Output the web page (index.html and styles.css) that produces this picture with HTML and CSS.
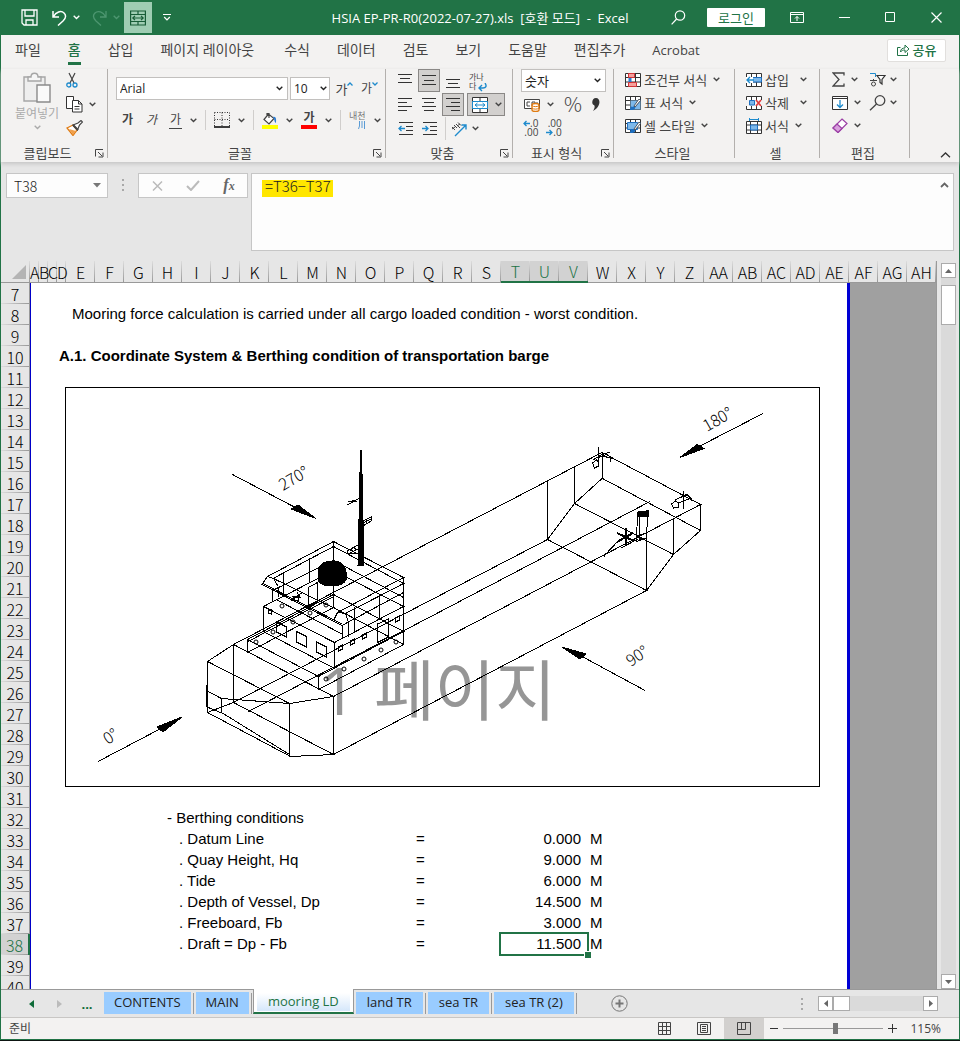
FILE: index.html
```html
<!DOCTYPE html>
<html lang="ko">
<head>
<meta charset="utf-8">
<title>HSIA EP-PR-R0(2022-07-27).xls - Excel</title>
<link rel="stylesheet" href="styles.css">
</head>
<body>
<svg class="defs" aria-hidden="true">
  <symbol id="chev" viewBox="0 0 7 5"><path d="M.7 .8L3.5 3.5 6.3 .8" fill="none" stroke="currentColor" stroke-width="1.4"/></symbol>
  <symbol id="launch" viewBox="0 0 9 9"><path d="M.5 7.500V.5H8M3 3l4 4M8 3.500V8H3.500" fill="none" stroke="#444"/></symbol>
  <symbol id="grid" viewBox="0 0 16 14"><path d="M.5 .5h15v13H.5zM.5 4.500h15M.5 9h15M5.500 .5v13M10.500 .5v13" fill="#fff" stroke="#333"/></symbol>
</svg>
<div class="window">
  <header class="titlebar">
    <div class="quick">
      <button class="q save" aria-label="저장"><svg width="17" height="17" viewBox="0 0 17 17" fill="none" stroke="#fff" stroke-width="1.3"><path d="M1 1h15v15H3l-2-2zM4 1v6h9V1M5 16v-5h7v5"/></svg></button>
      <button class="q undo" aria-label="실행 취소"><svg width="15" height="16" viewBox="0 0 15 16" fill="none" stroke="#fff" stroke-width="1.5"><path d="M1 1v6h6M1.500 6.500C4 2 9 0 12 3s1 6-1 8l-5 4.500"/></svg><svg class="chev" width="7" height="5"><use href="#chev"/></svg></button>
      <button class="q redo" aria-label="다시 실행"><svg width="15" height="16" viewBox="0 0 15 16" fill="none" stroke="currentColor" stroke-width="1.3"><path d="M14 1v6H8M13.500 6.500C11 2 6 0 3 3s-1 6 1 8l5 4.500"/></svg><svg class="chev" width="7" height="5"><use href="#chev"/></svg></button>
      <button class="q merge" aria-label="병합하고 가운데 맞춤"><svg width="16" height="16" viewBox="0 0 16 16" fill="none" stroke="#185c37" stroke-width="1.2"><path d="M.6 1h14.800v14H.6zM.6 4.500h14.800M.6 11.500h14.800M8 1v3.500M8 11.500V15M3 8h10M5 5.800L2.800 8 5 10.200M11 5.800L13.200 8 11 10.200"/></svg></button>
      <button class="q more" aria-label="사용자 지정"><svg width="8" height="7" viewBox="0 0 8 7" fill="none" stroke="#fff"><path d="M0 .5h8M1.200 3L4 5.800 6.800 3" stroke-width="1.200"/></svg></button>
    </div>
    <div class="doc">HSIA EP-PR-R0(2022-07-27).xls  [호환 모드]  -  Excel</div>
    <div class="sys">
      <button class="q" aria-label="검색"><svg width="15" height="15" viewBox="0 0 15 15" fill="none" stroke="#fff" stroke-width="1.200"><circle cx="9" cy="5.500" r="4.700"/><path d="M5.600 9L.6 14.400"/></svg></button>
      <button class="login">로그인</button>
      <button class="q" aria-label="리본 표시"><svg width="14" height="11" viewBox="0 0 14 11" fill="none" stroke="#fff"><path d="M.5 .5h13v10H.5zM.5 2.500h13M7 9V4.500M5 6.500l2-2 2 2"/></svg></button>
      <button class="q" aria-label="최소화"><svg width="11" height="11"><path d="M0 5.500h11" stroke="#fff"/></svg></button>
      <button class="q" aria-label="최대화"><svg width="11" height="11"><path d="M.5 .5h9v9h-9z" fill="none" stroke="#fff"/></svg></button>
      <button class="q" aria-label="닫기"><svg width="11" height="11"><path d="M.5 .5l10 10M10.500 .5l-10 10" stroke="#fff" stroke-width="1.200"/></svg></button>
    </div>
  </header>

  <nav class="tabs">
    <a href="#">파일</a><a href="#" class="on">홈</a><a href="#">삽입</a><a href="#" class="wide">페이지 레이아웃</a><a href="#">수식</a><a href="#">데이터</a><a href="#">검토</a><a href="#">보기</a><a href="#">도움말</a><a href="#">편집추가</a><a href="#">Acrobat</a>
    <button class="share"><svg width="13" height="12" viewBox="0 0 13 12" fill="none" stroke="#217346"><path d="M3.500 3.500H.5v8h10V8.500M3.500 8c0-3 2-4 4.500-4V1l4 4-4 3.500V6C6 6 4.500 6.500 3.500 8z"/></svg>공유</button>
  </nav>

  <section class="ribbon">
    <div class="group clip">
      <div class="body row">
        <button class="paste"><svg width="28" height="31" viewBox="0 0 28 31" fill="#eee" stroke="#a6a6a6" stroke-width="1.400"><path d="M1 5h21v24H1z"/><path d="M5 9V5h3c0-5 7-5 7 0h3v4z" fill="#f6f6f6"/><path d="M14 13h13v17H14z" fill="#fafafa" stroke="#8a8a8a"/></svg><span>붙여넣기</span><svg class="chev" width="7" height="5"><use href="#chev"/></svg></button>
        <div class="col side">
          <button aria-label="잘라내기"><svg width="12" height="16" viewBox="0 0 12 16" fill="none"><path d="M3 1l5 10M9 1L4 11" stroke="#444" stroke-width="1.200"/><circle cx="2.800" cy="13" r="2" stroke="#1e8bcd" stroke-width="1.300"/><circle cx="9" cy="13" r="2" stroke="#1e8bcd" stroke-width="1.300"/></svg></button>
          <button aria-label="복사"><svg width="17" height="17" viewBox="0 0 17 17" fill="#fff" stroke="#333"><path d="M.5 .5h7v12h-7z"/><path d="M6.500 4.500h6l3.500 3.500v8H6.500zM12.500 4.500V8H16M8.500 10.500h5M8.500 13h5"/></svg><svg class="chev" width="7" height="5"><use href="#chev"/></svg></button>
          <button aria-label="서식 복사"><svg width="17" height="16" viewBox="0 0 17 16"><path d="M1 8l6-3 4 5-4 5.500z" fill="#fff" stroke="#e07b12" stroke-width="1.300"/><path d="M3 9l7 2-3 4z" fill="#f0a04b"/><path d="M7 5l5-2 3-2.500 1.500 1.500-3 3-2 5z" fill="#fff" stroke="#444" stroke-width="1.200"/><path d="M7 5l5 5" stroke="#444" stroke-width="2"/></svg></button>
        </div>
      </div>
      <div class="label"><span>클립보드</span><button aria-label="클립보드 옵션"><svg width="9" height="9"><use href="#launch"/></svg></button></div>
    </div>

    <div class="group font">
      <div class="body col">
        <div class="row fonts">
          <label class="combo name"><input value="Arial" aria-label="글꼴"><svg width="7" height="5"><use href="#chev"/></svg></label>
          <label class="combo size"><input value="10" aria-label="글꼴 크기"><svg width="7" height="5"><use href="#chev"/></svg></label>
          <button class="grow">가<svg width="6" height="4" viewBox="0 0 6 4"><path d="M.5 3.500L3 1l2.500 2.500" fill="none" stroke="#1e8bcd" stroke-width="1.300"/></svg></button>
          <button class="grow small">가<svg width="6" height="4" viewBox="0 0 6 4"><path d="M.5 .5L3 3 5.500 .5" fill="none" stroke="#1e8bcd" stroke-width="1.300"/></svg></button>
        </div>
        <div class="row styles">
          <button class="ga b">가</button><button class="ga i">가</button><button class="ga u">가</button>
          <svg class="chev" width="7" height="5"><use href="#chev"/></svg><i class="bar"></i>
          <button aria-label="테두리"><svg width="16" height="16" viewBox="0 0 16 16" fill="none" stroke="#333"><path d="M.5 .5h15v14M.5 .5v14M8 .5v14M.5 7.500h15" stroke-dasharray="1 1.500"/><path d="M0 15h16" stroke="#000" stroke-width="1.500"/></svg></button>
          <svg class="chev" width="7" height="5"><use href="#chev"/></svg><i class="bar"></i>
          <button aria-label="채우기 색"><svg width="16" height="17" viewBox="0 0 16 17"><path d="M6.500 2L2 7.500 7 12l5-5.500zM5 4V1.500h2V6" fill="#fff" stroke="#444" stroke-width="1.200"/><path d="M11 5c4-1 3 4 3 6-2-1-1-3-3-6z" fill="#2b7cd3"/><path d="M0 13h16v4H0z" fill="#ff0"/></svg></button>
          <svg class="chev" width="7" height="5"><use href="#chev"/></svg>
          <button class="ga red">가</button>
          <svg class="chev" width="7" height="5"><use href="#chev"/></svg><i class="bar"></i>
          <button class="ruby"><span>내천</span><svg width="8" height="8" viewBox="0 0 8 8" fill="none" stroke="#5a9bd5"><path d="M1.500 0v5l-1 3M4 0v7M6.500 0v8"/></svg></button>
          <svg class="chev" width="7" height="5"><use href="#chev"/></svg>
        </div>
      </div>
      <div class="label"><span>글꼴</span><button aria-label="글꼴 옵션"><svg width="9" height="9"><use href="#launch"/></svg></button></div>
    </div>

    <div class="group align">
      <div class="body aligns">
        <button aria-label="위쪽"><svg width="14" height="15" viewBox="0 0 14 15"><path d="M0 1.500h14M2 5.500h10M0 9.500h14" stroke="#333"/></svg></button>
        <button class="on" aria-label="가운데"><svg width="14" height="15" viewBox="0 0 14 15"><path d="M0 2.500h14M2 7.500h10M0 11.500h14" stroke="#333"/></svg></button>
        <button aria-label="아래쪽"><svg width="14" height="15" viewBox="0 0 14 15"><path d="M0 6.500h14M2 10.500h10M0 14.500h14" stroke="#333"/></svg></button>
        <button class="wrap"><span>가나<br>다</span><svg width="9" height="9" viewBox="0 0 9 9" fill="none" stroke="#1e8bcd" stroke-width="1.400"><path d="M7 0c2 3 1 5-2 5H1M4 2L1 5l3 3"/></svg></button>
        <button aria-label="왼쪽"><svg width="14" height="15" viewBox="0 0 14 15"><path d="M0 1.500h14M0 5.500h9M0 9.500h14M0 13.500h9" stroke="#333"/></svg></button>
        <button aria-label="가로 가운데"><svg width="14" height="15" viewBox="0 0 14 15"><path d="M0 1.500h14M2 5.500h10M0 9.500h14M2 13.500h10" stroke="#333"/></svg></button>
        <button class="on" aria-label="오른쪽"><svg width="14" height="15" viewBox="0 0 14 15"><path d="M0 1.500h14M5 5.500h9M0 9.500h14M5 13.500h9" stroke="#333"/></svg></button>
        <button class="on mergebtn" aria-label="병합"><svg width="16" height="16" viewBox="0 0 16 16"><path d="M.5 .5h15v15H.5zM8 .5v4M8 11.500v4" fill="#fff" stroke="#333"/><path d="M.5 4.500h15v7H.5z" fill="#fff" stroke="#1e8bcd"/><path d="M3 8h10M5.500 6L3 8l2.500 2M10.500 6L13 8l-2.500 2" fill="none" stroke="#1e8bcd"/></svg><svg class="chev" width="7" height="5"><use href="#chev"/></svg></button>
        <button aria-label="내어쓰기"><svg width="15" height="15" viewBox="0 0 15 15" fill="none"><path d="M1 1.500h14M8 5.500h7M8 9.500h7M1 13.500h14" stroke="#333"/><path d="M7 7.500H1M3.500 5L1 7.500 3.500 10" stroke="#1e8bcd" stroke-width="1.300"/></svg></button>
        <button aria-label="들여쓰기"><svg width="15" height="15" viewBox="0 0 15 15" fill="none"><path d="M1 1.500h14M8 5.500h7M8 9.500h7M1 13.500h14" stroke="#333"/><path d="M0 7.500h6M3.500 5L6 7.500 3.500 10" stroke="#1e8bcd" stroke-width="1.300"/></svg></button>
        <button class="orient" aria-label="방향"><svg width="16" height="16" viewBox="0 0 16 16" fill="none"><path d="M4 15L14.500 4.500M10.500 4h4.500v4.500" stroke="#1e8bcd" stroke-width="1.400"/><path d="M1 6l3 3M3 4l3 3M5 3l4 4M7 1.500l3 3M1 8l3-2M6 5l3-2" stroke="#444"/></svg><svg class="chev" width="7" height="5"><use href="#chev"/></svg></button>
      </div>
      <div class="label"><span>맞춤</span><button aria-label="맞춤 옵션"><svg width="9" height="9"><use href="#launch"/></svg></button></div>
    </div>

    <div class="group num">
      <div class="body col">
        <label class="combo fmt"><input value="숫자" aria-label="표시 형식"><svg width="7" height="5"><use href="#chev"/></svg></label>
        <div class="row nums">
          <button aria-label="회계"><svg width="17" height="15" viewBox="0 0 17 15" fill="none"><path d="M.5 2.500h15v9H.5z" fill="#fff" stroke="#444"/><path d="M6 5H3v4h3M8 9V5h3v4M13 5v3" stroke="#444"/><path d="M8 8c0-2 7-2 7 0v5c0 2-7 2-7 0z" fill="#fff" stroke="#e07b12" stroke-width="1.400"/><path d="M8 8.500c1 1.500 6 1.500 7 0M8 11c1 1.500 6 1.500 7 0" stroke="#e07b12"/></svg><svg class="chev" width="7" height="5"><use href="#chev"/></svg></button>
          <button class="pct">%</button>
          <button aria-label="쉼표"><svg width="8" height="13" viewBox="0 0 8 13"><path d="M4 0c5 0 5 9-3 13 2-3 2-5 1-6C-1 6 0 0 4 0z" fill="#333"/></svg></button>
        </div>
        <div class="row decs">
          <button class="dec"><svg width="7" height="7" viewBox="0 0 7 7" fill="none" stroke="#1e8bcd" stroke-width="1.300"><path d="M7 3.500H1M3.500 1L1 3.500 3.500 6"/></svg>.0<br>.00</button>
          <button class="dec">.00<br><svg width="7" height="7" viewBox="0 0 7 7" fill="none" stroke="#1e8bcd" stroke-width="1.300"><path d="M0 3.500h6M3.500 1L6 3.500 3.500 6"/></svg>.0</button>
        </div>
      </div>
      <div class="label"><span>표시 형식</span><button aria-label="표시 형식 옵션"><svg width="9" height="9"><use href="#launch"/></svg></button></div>
    </div>

    <div class="group stl">
      <div class="body col list">
        <button><svg width="16" height="14" viewBox="0 0 16 14"><use href="#grid"/><path d="M3.500 .5h6v4h-6zM3.500 9.500h8v4h-8z" fill="#f4a09c" stroke="#d13438"/><path d="M3.500 5h3v4h-3z" fill="#2b7cd3"/></svg>조건부 서식<svg class="chev" width="7" height="5"><use href="#chev"/></svg></button>
        <button><svg width="16" height="14" viewBox="0 0 16 14"><use href="#grid"/><path d="M5.500 4.500h10v9h-10z" fill="#7db8ea"/><path d="M5 14c0-4 2-4 3-3l6-8 2 1-6 8c0 2-3 2-5 2z" fill="#1e6fc0"/><path d="M9 10l5-7 1.500 1.500L10 11z" fill="#fff" stroke="#444" stroke-width=".8"/></svg>표 서식<svg class="chev" width="7" height="5"><use href="#chev"/></svg></button>
        <button><svg width="16" height="14" viewBox="0 0 16 14"><use href="#grid"/><path d="M2.500 3.500h10v7h-10z" fill="#7db8ea" stroke="#1e6fc0"/><path d="M5 14c0-4 2-4 3-3l6-8 2 1-6 8c0 2-3 2-5 2z" fill="#1e6fc0"/><path d="M9 10l5-7 1.500 1.500L10 11z" fill="#fff" stroke="#444" stroke-width=".8"/></svg>셀 스타일<svg class="chev" width="7" height="5"><use href="#chev"/></svg></button>
      </div>
      <div class="label"><span>스타일</span></div>
    </div>

    <div class="group cells">
      <div class="body col list">
        <button><svg width="16" height="14" viewBox="0 0 16 14"><use href="#grid"/><path d="M6 4.500h9.500V9H6z" fill="#7db8ea" stroke="#1e6fc0"/><path d="M0 4h7v6H0z" fill="#fff"/><path d="M8 7H1M4 4L1 7l3 3" fill="none" stroke="#1e8bcd" stroke-width="1.400"/></svg><span>삽입</span><svg class="chev far" width="7" height="5"><use href="#chev"/></svg></button>
        <button><svg width="16" height="14" viewBox="0 0 16 14"><use href="#grid"/><path d="M0 4h16v6H0z" fill="#f3f2f1"/><path d="M3.500 4.500h5V9h-5z" fill="#7db8ea" stroke="#1e6fc0"/><path d="M10 4l5 6M15 4l-5 6" stroke="#e03b3b" stroke-width="1.600"/></svg><span>삭제</span><svg class="chev far" width="7" height="5"><use href="#chev"/></svg></button>
        <button><svg width="16" height="16" viewBox="0 0 16 16"><path d="M.5 3.500h15v12H.5zM.5 7h15M.5 12h15M4.500 3.500v12M11.500 3.500v12" fill="#fff" stroke="#333"/><path d="M4.500 7h7v5h-7z" fill="#7db8ea" stroke="#1e6fc0"/><path d="M3.500 1.500h9M3.500 0v3M12.500 0v3" stroke="#1e8bcd"/></svg><span>서식</span><svg class="chev" width="7" height="5"><use href="#chev"/></svg></button>
      </div>
      <div class="label"><span>셀</span></div>
    </div>

    <div class="group edit">
      <div class="body edits">
        <button aria-label="합계"><svg width="13" height="15" viewBox="0 0 13 15" fill="none" stroke="#444" stroke-width="1.300"><path d="M12 3.500V1H1l6 6.500L1 14h11v-2.500"/></svg><svg class="chev" width="7" height="5"><use href="#chev"/></svg></button>
        <button aria-label="정렬 및 필터"><svg width="17" height="15" viewBox="0 0 17 15" fill="none"><path d="M1 1.500h5.500V5" stroke="#1e8bcd"/><path d="M1 8.500h7M4.500 7v2" stroke="#444"/><circle cx="4.500" cy="12" r="2" stroke="#444"/><path d="M8 3.500h8l-3 4v4.500l-2-1.500v-3z" stroke="#333" fill="#fff" stroke-width="1.200"/></svg><svg class="chev" width="7" height="5"><use href="#chev"/></svg></button>
        <button aria-label="채우기"><svg width="16" height="14" viewBox="0 0 16 14" fill="#fff" stroke="#333"><path d="M.5 .5h15v13H.5zM.5 2.500h15"/><path d="M8 4v7M5 8.500L8 11.500l3-3" fill="none" stroke="#1e8bcd" stroke-width="1.300"/></svg><svg class="chev" width="7" height="5"><use href="#chev"/></svg></button>
        <button aria-label="찾기"><svg width="17" height="16" viewBox="0 0 17 16" fill="none" stroke="#444" stroke-width="1.300"><circle cx="11" cy="5.500" r="4.800"/><path d="M7.500 9L1 15.300"/></svg><svg class="chev" width="7" height="5"><use href="#chev"/></svg></button>
        <button aria-label="지우기"><svg width="16" height="15" viewBox="0 0 16 15" stroke="#9b3fa5" stroke-width="1.200"><path d="M10 1l5 4.500-9 9L1 10z" fill="#fff"/><path d="M5 6l5 4.500-4 4L1 10z" fill="#d9a0de"/></svg><svg class="chev" width="7" height="5"><use href="#chev"/></svg></button>
      </div>
      <div class="label"><span>편집</span></div>
    </div>
    <button class="collapse" aria-label="리본 축소"><svg width="11" height="6" viewBox="0 0 11 6"><path d="M1 5.300L5.500 1 10 5.300" fill="none" stroke="#333" stroke-width="1.300"/></svg></button>
  </section>

  <section class="formula">
    <label class="namebox"><input value="T38" aria-label="이름 상자"><svg width="8" height="5"><path d="M0 0h8L4 4.500z" fill="#777"/></svg></label>
    <svg class="dots" width="2" height="12"><path d="M0 1h2M0 6h2M0 11h2" stroke="#a8a8a8" stroke-width="2"/></svg>
    <div class="fxbtns">
      <button aria-label="취소"><svg width="11" height="10"><path d="M1 .5l9 9M10 .5l-9 9" stroke="#bbb" stroke-width="1.500"/></svg></button>
      <button aria-label="입력"><svg width="14" height="11"><path d="M1 6l4 4 8-9" fill="none" stroke="#bbb" stroke-width="2"/></svg></button>
      <button class="fx" aria-label="함수 삽입"><i>f<small>x</small></i></button>
    </div>
    <div class="fbox">
      <textarea aria-label="수식 입력줄" spellcheck="false">=T36−T37</textarea>
      <button aria-label="축소"><svg width="9" height="6" viewBox="0 0 9 6"><path d="M1 5l3.500-3.500L8 5" fill="none" stroke="#666" stroke-width="1.800"/></svg></button>
    </div>
  </section>

  <main class="work">
    <div class="sheet">
      <table>
        <colgroup><col class="rh"><col span="4" class="nar"><col span="30" class="std"></colgroup>
        <thead><tr><th class="corner"><svg width="14" height="14"><path d="M14 0v14H0z" fill="#b4b4b4"/></svg></th><th>A</th><th>B</th><th>C</th><th>D</th><th>E</th><th>F</th><th>G</th><th>H</th><th>I</th><th>J</th><th>K</th><th>L</th><th>M</th><th>N</th><th>O</th><th>P</th><th>Q</th><th>R</th><th>S</th><th class="sel">T</th><th class="sel">U</th><th class="sel">V</th><th>W</th><th>X</th><th>Y</th><th>Z</th><th>AA</th><th>AB</th><th>AC</th><th>AD</th><th>AE</th><th>AF</th><th>AG</th><th>AH</th></tr></thead>
        <tbody>
          <tr><th>7</th><td class="first last" colspan="31"></td><td class="out" colspan="3"></td></tr>
          <tr><th>8</th><td class="first" colspan="4"></td><td class="last note" colspan="27">Mooring force calculation is carried under all cargo loaded condition - worst condition.</td><td class="out" colspan="3"></td></tr>
          <tr><th>9</th><td class="first last" colspan="31"></td><td class="out" colspan="3"></td></tr>
          <tr><th>10</th><td class="first" colspan="3"></td><td class="last head" colspan="28">A.1. Coordinate System &amp; Berthing condition of transportation barge</td><td class="out" colspan="3"></td></tr>
          <tr><th>11</th><td class="first last" colspan="31"></td><td class="out" colspan="3"></td></tr>
          <tr><th>12</th><td class="first last" colspan="31"></td><td class="out" colspan="3"></td></tr>
          <tr><th>13</th><td class="first last" colspan="31"></td><td class="out" colspan="3"></td></tr>
          <tr><th>14</th><td class="first last" colspan="31"></td><td class="out" colspan="3"></td></tr>
          <tr><th>15</th><td class="first last" colspan="31"></td><td class="out" colspan="3"></td></tr>
          <tr><th>16</th><td class="first last" colspan="31"></td><td class="out" colspan="3"></td></tr>
          <tr><th>17</th><td class="first last" colspan="31"></td><td class="out" colspan="3"></td></tr>
          <tr><th>18</th><td class="first last" colspan="31"></td><td class="out" colspan="3"></td></tr>
          <tr><th>19</th><td class="first last" colspan="31"></td><td class="out" colspan="3"></td></tr>
          <tr><th>20</th><td class="first last" colspan="31"></td><td class="out" colspan="3"></td></tr>
          <tr><th>21</th><td class="first last" colspan="31"></td><td class="out" colspan="3"></td></tr>
          <tr><th>22</th><td class="first last" colspan="31"></td><td class="out" colspan="3"></td></tr>
          <tr><th>23</th><td class="first last" colspan="31"></td><td class="out" colspan="3"></td></tr>
          <tr><th>24</th><td class="first last" colspan="31"></td><td class="out" colspan="3"></td></tr>
          <tr><th>25</th><td class="first last" colspan="31"></td><td class="out" colspan="3"></td></tr>
          <tr><th>26</th><td class="first last" colspan="31"></td><td class="out" colspan="3"></td></tr>
          <tr><th>27</th><td class="first last" colspan="31"></td><td class="out" colspan="3"></td></tr>
          <tr><th>28</th><td class="first last" colspan="31"></td><td class="out" colspan="3"></td></tr>
          <tr><th>29</th><td class="first last" colspan="31"></td><td class="out" colspan="3"></td></tr>
          <tr><th>30</th><td class="first last" colspan="31"></td><td class="out" colspan="3"></td></tr>
          <tr><th>31</th><td class="first last" colspan="31"></td><td class="out" colspan="3"></td></tr>
          <tr><th>32</th><td class="first" colspan="7"></td><td class="last cond" colspan="24">- Berthing conditions</td><td class="out" colspan="3"></td></tr>
          <tr><th>33</th><td class="first" colspan="7"></td><td class="item" colspan="9">. Datum Line</td><td class="eq">=</td><td colspan="2"></td><td class="val" colspan="3">0.000</td><td class="last eq" colspan="9">M</td><td class="out" colspan="3"></td></tr>
          <tr><th>34</th><td class="first" colspan="7"></td><td class="item" colspan="9">. Quay Height, Hq</td><td class="eq">=</td><td colspan="2"></td><td class="val" colspan="3">9.000</td><td class="last eq" colspan="9">M</td><td class="out" colspan="3"></td></tr>
          <tr><th>35</th><td class="first" colspan="7"></td><td class="item" colspan="9">. Tide</td><td class="eq">=</td><td colspan="2"></td><td class="val" colspan="3">6.000</td><td class="last eq" colspan="9">M</td><td class="out" colspan="3"></td></tr>
          <tr><th>36</th><td class="first" colspan="7"></td><td class="item" colspan="9">. Depth of Vessel, Dp</td><td class="eq">=</td><td colspan="2"></td><td class="val" colspan="3">14.500</td><td class="last eq" colspan="9">M</td><td class="out" colspan="3"></td></tr>
          <tr><th>37</th><td class="first" colspan="7"></td><td class="item" colspan="9">. Freeboard, Fb</td><td class="eq">=</td><td colspan="2"></td><td class="val" colspan="3">3.000</td><td class="last eq" colspan="9">M</td><td class="out" colspan="3"></td></tr>
          <tr><th class="sel">38</th><td class="first" colspan="7"></td><td class="item" colspan="9">. Draft = Dp - Fb</td><td class="eq">=</td><td colspan="2"></td><td class="val active" colspan="3">11.500</td><td class="last eq" colspan="9">M</td><td class="out" colspan="3"></td></tr>
          <tr><th>39</th><td class="first last" colspan="31"></td><td class="out" colspan="3"></td></tr>
          <tr><th>40</th><td class="first last" colspan="31"></td><td class="out" colspan="3"></td></tr>
        </tbody>
      </table>
      <svg class="drawing" width="755" height="400" viewBox="65 387 755 400" role="img" aria-label="바지선 좌표계">
        <text class="watermark" x="319" y="715">1 페이지</text>
        <g fill="none" stroke="#000" stroke-width="1" shape-rendering="crispEdges">
          <path d="M65.500 387.500H819.500V786.500H65.500z"/>
          <!-- hull -->
          <path d="M207.500 661.500L233.500 644.500L602 452.500L700.500 504.500L333.500 696.500L233.500 644.500V702.500L333.500 754.500L646.500 590.500L547.500 539.500L233.500 702.500L207.500 712.500V661.500L289.500 703.500L333.500 696.500V754.500L290.500 756.500L207.500 712.500M289.500 703.500V756.500M289.500 703.500L221.500 698.500V712.500L289.500 754.500M207 691L221.500 698.500M207 707L221.500 713"/>
          <path d="M206.500 685V707"/>
          <path d="M602.500 452V478.500L700.500 530.500V504M602 478.500L574.500 503.500L547.500 539.500V480.500M574.500 466.500V503.500L673.500 554.500L700.500 530.500M673.500 554.500L646.500 590.500V532.500M673.500 517.500V554.500M248.500 711.500L430 617L650 501.500"/>
          <!-- deck house, lower tier -->
          <path d="M247.500 652.500V639.500L318.500 676.500V689.500L403.500 644.500M247.500 639.500L333.500 594.500L403.500 631.500L318.500 676.500M247.500 652.500L333.500 607.500L403.500 644.500M247 642L333 597"/>
          <!-- middle tier -->
          <path d="M263.500 606.500V631.500L334.500 668.500V642.500zM263.500 606.500L333.500 570.500L403.500 606.500L334.500 642.500M277 600L342 634"/>
          <!-- bridge -->
          <path d="M267.500 576.500L333.500 541.500L403.500 577.500L337.500 612.500L333.500 620.500M273 578.500L333.500 546.500L403.500 583.500L345.500 613.500L349 624M267.500 576.500L262 584.500L342 625.500L403.500 592.500M267.500 576.500L273.500 578.500L278 586M272.500 590.500L333.500 560.500L403.500 597.500M262 583L342 624M273.500 578.500L345 613.500M337.500 612.500L345.500 613.500M333.500 541V607M403.500 577V644.500"/>
          <path d="M272.500 588V602M278.500 588V597M283.500 572V595M309.500 558V582M342.500 625V638M348.500 623V637M354.500 607V632M379.500 595V620M308.500 587.500L317.500 582.500V602L308.500 606.500zM377.500 624L388.500 619V637L377.500 642.500zM291 601l12-9M293 598l5-2v4h-4zM292 596l9 2M297 592l3 5"/>
          <path d="M276.500 622L286.500 627V637L276.500 632zM296.500 631.500L306.500 636.500V647L296.500 642zM316.500 642L326.500 647V657L316.500 652z"/>
          <path d="M338.500 647l4-2v4l-4 2zM350.500 641l4-2v4l-4 2zM362.500 635l4-2v4l-4 2zM395.500 618l4-2v4l-4 2zM268.500 611l3-1v4l-3-1z"/>
          <g shape-rendering="auto"><circle cx="326" cy="679" r="2"/><circle cx="344" cy="669" r="2"/><circle cx="364" cy="659" r="2"/><circle cx="381" cy="650" r="2"/><circle cx="396" cy="642" r="2"/><circle cx="256" cy="642" r="2"/><circle cx="273" cy="632" r="2"/><circle cx="293" cy="622" r="2"/><circle cx="310" cy="613" r="2"/><circle cx="326" cy="605" r="2"/><circle cx="282" cy="606" r="2"/></g>
          <path d="M318 572q2-11 14-11q13 0 14 11v8q-3 6-14 6q-12 0-14-6z" fill="#000"/>
          <path d="M360.500 450h1l2.500 115h-6z" fill="#000"/>
          <path d="M347 505l13-7M348 501l4 1M352 500l5 2M363 521l8-4v4l-8 5zM363 523l8-4M366 519v5M347 551l11-6v4l-10 5zM350 549l4 3M353 547l4 3M348 553h10"/>
          <!-- deck fittings -->
          <path d="M598.500 447v20M593 460l8-5 9-3M592.500 463l4-3 2 2v4l-4 2zM602 456l9 2-1 4M606 453l6 6M597 458l11-4M683.500 491v18M671.500 504l4-3 3 2v4l-5 1zM675 500l12-6 4 4-12 5M686 495l5 3v3M680 498l8-4"/>
          <path d="M637.500 512.500L648.500 510.500L646 538L636.500 541.500zM639.500 514V540M648.500 511l-1 12M642 540l-6-4 10-3"/>
          <path d="M638 511h9v5h-9z" fill="#000"/>
          <path d="M604 556l16-17M606 553l-2 4M621 548l17-9"/>
          <path d="M625.500 528v18M617 533l17 8M617 542l16-9" stroke-width="2"/>
          <!-- heading arrows -->
          <path d="M232.500 474.500L300 510M763 413.500L700 446M645 690.500L583 657M98 761.500L160 729"/>
          <path d="M316 518.500l-25-9.500 7-4zM680 457.500l17-13 7 4zM562 647l18 12 6-5zM182 717l-25 10 6 5z" fill="#000"/>
        </g>
        <g class="deg">
          <text transform="translate(283 491) rotate(-30)">270°</text>
          <text transform="translate(707 432) rotate(-30)">180°</text>
          <text transform="translate(631 667) rotate(-34)">90°</text>
          <text transform="translate(108 745) rotate(-34)">0°</text>
        </g>
      </svg>
    </div>
    <div class="vscroll">
      <button aria-label="위로"><svg width="7" height="4"><path d="M0 4h7L3.500 0z" fill="#666"/></svg></button>
      <div class="track"><div class="thumb"></div></div>
      <button aria-label="아래로"><svg width="7" height="4"><path d="M0 0h7L3.500 4z" fill="#666"/></svg></button>
    </div>
  </main>

  <footer class="sheets">
    <button class="nav" aria-label="이전"><svg width="5" height="8"><path d="M5 0v8L0 4z" fill="#0e6b38"/></svg></button>
    <button class="nav" aria-label="다음"><svg width="5" height="8"><path d="M0 0v8l5-4z" fill="#bbb"/></svg></button>
    <button class="nav dots3">...</button>
    <a href="#">CONTENTS</a><a href="#">MAIN</a><a href="#" class="cur"><span>mooring LD</span></a><a href="#">land TR</a><a href="#">sea TR</a><a href="#">sea TR (2)</a>
    <button class="add" aria-label="새 시트"><svg width="17" height="17" fill="none" stroke="#777"><circle cx="8.500" cy="8.500" r="7.700"/><path d="M4.500 8.500h8M8.500 4.500v8" stroke-width="2"/></svg></button>
    <svg class="dots" width="2" height="12"><path d="M0 1h2M0 6h2M0 11h2" stroke="#a8a8a8" stroke-width="2"/></svg>
    <div class="hscroll">
      <button aria-label="왼쪽으로"><svg width="4" height="7"><path d="M4 0v7L0 3.500z" fill="#666"/></svg></button>
      <div class="track"><div class="thumb"></div></div>
      <button aria-label="오른쪽으로"><svg width="4" height="7"><path d="M0 0v7l4-3.500z" fill="#666"/></svg></button>
    </div>
  </footer>

  <footer class="status">
    <span class="ready">준비</span>
    <button class="view" aria-label="기본"><svg width="13" height="13" fill="none" stroke="#444"><path d="M.5 .5h12v12H.5zM4.500 .5v12M8.500 .5v12M.5 4.500h12M.5 8.500h12"/></svg></button>
    <button class="view" aria-label="페이지 레이아웃"><svg width="14" height="13" fill="none" stroke="#444"><path d="M.5 .5h13v12H.5zM3.500 2.500h7v8h-7zM5 4.500h4M5 6.500h4M5 8.500h4"/></svg></button>
    <button class="view on" aria-label="페이지 나누기"><svg width="14" height="13" fill="none" stroke="#444"><path d="M.5 .5h13v12H.5zM4.500 .5v7M8.500 .5v7M.5 7.500h8"/></svg></button>
    <button class="zoom" aria-label="축소"><svg width="8" height="9"><path d="M0 4.500h8" stroke="#333"/></svg></button>
    <input type="range" min="0" max="100" value="53" aria-label="확대/축소">
    <button class="zoom" aria-label="확대"><svg width="9" height="9"><path d="M0 4.500h9M4.500 0v9" stroke="#333"/></svg></button>
    <span class="percent">115%</span>
  </footer>
</div>
</body>
</html>
```
FILE: styles.css
```css
* { box-sizing: border-box; }
body {
  margin: 0;
  background: #0d1512;
  color: #444;
  font: 13px/16px "Open Sans", "Noto Sans CJK KR", sans-serif;
}
button, input, textarea {
  margin: 0;
  padding: 0;
  border: 0;
  background: none;
  color: inherit;
  font: inherit;
  outline: 0;
}
button { display: flex; align-items: center; justify-content: center; white-space: nowrap; }
a { color: inherit; text-decoration: none; }
svg { display: block; flex: none; }
.defs { position: absolute; width: 0; height: 0; }
.row { display: flex; align-items: center; }
.col { display: flex; flex-direction: column; }

.window {
  display: flex;
  flex-direction: column;
  height: calc(100vh - 1px);
  border: solid #217346;
  border-width: 0 1px 1px;
  background: #e6e6e6;
}

/* title bar */
.titlebar {
  display: grid;
  grid-template-columns: 1fr auto 1fr;
  align-items: center;
  height: 35px;
  background: #217346;
  color: #fff;
}
.quick { display: flex; align-items: center; padding-left: 20px; }
.quick .chev { margin-left: 6px; }
.undo { margin-left: 14px; }
.redo { margin-left: 12px; color: #4d9670; }
.merge { width: 28px; height: 31px; margin-left: 4px; background: #9fcdb3; }
.more { margin-left: 11px; }
.doc { white-space: pre; }
.sys { display: flex; align-items: center; justify-content: flex-end; padding-right: 17px; gap: 35px; }
.sys .login {
  width: 58px;
  height: 19px;
  margin: 0 -10px 0 -14px;
  border-radius: 1px;
  background: #fff;
  color: #217346;
}

/* ribbon tabs */
.tabs {
  display: flex;
  align-items: center;
  height: 34px;
  padding: 0 13px 2px 14px;
  gap: 27px;
  background: #f3f2f1;
  font-size: 14px;
  line-height: 22px;
}
.tabs a { padding: 2px 0 1px; border-bottom: 3px solid transparent; white-space: nowrap; }
.tabs a.wide { padding-right: 3px; }
.tabs .on { border-color: #217346; color: #217346; font-weight: 500; }
.tabs a:last-of-type { font-size: 13px; }
.share {
  width: 59px;
  height: 23px;
  margin: -2px 0 0 auto;
  gap: 3px;
  border: 1px solid #e1dfdd;
  border-radius: 2px;
  background: #fff;
  color: #217346;
  font-size: 13px;
  font-weight: 500;
}

/* ribbon groups */
.ribbon {
  display: flex;
  height: 93px;
  flex: none;
  background: #f3f2f1;
  box-shadow: 0 2px 4px #c6c6c6;
  z-index: 1;
}
.group {
  display: flex;
  flex-direction: column;
  height: 89px;
  border-right: 1px solid #b3b0ad;
}
.group .body { flex: 1; min-height: 0; }
.label { display: flex; align-items: center; height: 10px; padding-right: 3px; line-height: 10px; }
.label span { flex: 1; text-align: center; }
.label button { width: 10px; }
.clip { width: 107px; }
.clip .body { align-items: flex-start; }
.paste {
  width: 64px;
  flex-direction: column;
  padding: 3px 0 0 8px;
  gap: 3px;
  color: #aaa;
  font-size: 12px;
}
.side { height: 70px; padding-left: 1px; justify-content: space-between; }
.side button { height: 22px; justify-content: flex-start; gap: 6px; }
.font { width: 278px; }
.font .body { padding: 8px 0 0 8px; }
.fonts { height: 23px; gap: 2px; }
.combo {
  display: flex;
  align-items: center;
  height: 23px;
  padding: 0 4px 0 3px;
  border: 1px solid #c2c0be;
  background: #fff;
  color: #222;
}
.combo input { flex: 1; min-width: 0; width: 0; }
.combo.name { width: 172px; font-size: 12px; }
.combo.size { width: 40px; padding-right: 2px; font-size: 12px; }
.grow { align-items: flex-start; width: 23px; margin-left: 1px; font-size: 13px; }
.grow svg { margin-top: 1px; }
.grow.small { font-size: 12px; margin-left: 0; }
.styles { height: 40px; gap: 8px; margin-left: 5px; }
.ga { width: 13px; margin-right: 3px; height: 18px; font-size: 12px; }
.styles .u { border-bottom: 1px solid #444; margin-right: 0; }
.b { font-weight: 700; }
.ga.i { font-style: italic; }
.styles .red { width: 16px; border-bottom: 4px solid #f00; font-weight: 700; margin: 0; }
.bar { width: 1px; height: 20px; background: #d0cecc; }
.ruby { flex-direction: column; align-items: flex-end; color: #777; font-size: 9px; line-height: 10px; }
.align { width: 127px; }
.aligns {
  display: grid;
  grid-template: repeat(3, 24px) / 24px 24px 24px 40px;
  padding-left: 7px;
}
.aligns button { height: 23px; }
.aligns .on { width: 22px; margin-left: 1px; border: 1px solid #8a8886; background: #d2d0ce; }
.aligns .wrap { justify-content: flex-start; align-items: flex-end; padding-left: 4px; font-size: 8px; line-height: 9px; text-align: left; }
.aligns .wrap span { width: 15px; margin-bottom: 2px; }
.aligns .wrap svg { margin-left: -6px; }
.aligns .mergebtn { width: 38px; gap: 7px; margin-left: 2px; padding-left: 1px; }
.aligns .orient { grid-column: span 2; justify-content: flex-start; gap: 5px; margin-left: 4px; border-left: 1px solid #d0cecc; padding-left: 5px; }
.num { width: 101px; }
.num .body { padding-left: 8px; }
.fmt { width: 85px; }
.nums { height: 24px; gap: 10px; padding-left: 3px; }
.nums button:first-child { gap: 6px; }
.pct { font: 300 20px/24px "Noto Sans CJK KR", sans-serif; }
.decs { gap: 8px; padding: 3px 0 0 2px; }
.dec { display: block; font-size: 10px; line-height: 9px; text-align: right; }
.dec svg { display: inline-block; }
.stl { width: 121px; }
.cells { width: 85px; }
.group .list { margin-top: -1px; padding-left: 11px; }
.list button { height: 23px; gap: 3px; align-self: flex-start; }
.list .chev { margin-left: 3px; }
.list .far { margin-left: 8px; }
.edit { width: 90px; }
.edits { display: grid; grid-template: repeat(3, 23px) / 37px 40px; margin-top: -1px; padding-left: 12px; }
.edits button { justify-content: flex-start; gap: 6px; }
.edits button:nth-child(even) { gap: 4px; }
.collapse { margin: auto 8px 4px auto; }

/* formula bar */
.formula { display: flex; height: 99px; flex: none; padding: 11px 5px 10px; color: #222; font-family: "Noto Sans CJK KR", sans-serif; }
.namebox { display: flex; align-items: center; width: 102px; height: 25px; padding: 0 6px 0 7px; border: 1px solid #c6c6c6; background: #fdfdfd; font-size: 14px; font-weight: 300; }
.namebox input { flex: 1; width: 0; min-width: 0; }
.formula .dots { margin: 6px 14px; }
.fxbtns { display: flex; align-items: center; width: 110px; height: 25px; border: 1px solid #c6c6c6; background: #fdfdfd; }
.fxbtns button { flex: 1; }
.fx { color: #666; font: bold 16px/20px "Liberation Serif", serif; }
.fx small { font-size: 12px; }
.fbox { display: flex; flex: 1; align-items: flex-start; margin-left: 3px; padding-right: 4px; border: 1px solid #c6c6c6; background: #fdfdfd; }
.fbox textarea {
  flex: 1;
  height: 76px;
  padding: 2px 13px;
  resize: none;
  background: linear-gradient(#ffe600, #ffe600) 10px 6px / 71px 17px no-repeat;
  font-size: 15px;
  font-weight: 300;
  line-height: 20px;
}
.fbox button { margin-top: 8px; }

/* worksheet */
.work { display: flex; flex: 1; min-height: 0; }
.sheet { position: relative; flex: 1; overflow: hidden; border-right: 1px solid #999; background: #a0a0a0; }
table { width: 935px; table-layout: fixed; border-spacing: 0; }
.rh { width: 29px; }
.nar { width: 9px; }
.std { width: 29px; }
th {
  padding: 0;
  background: linear-gradient(90deg, #ddd, #999) bottom / 100% 1px no-repeat #e6e6e6;
  border-right: 1px solid #999;
  color: #000;
  font: 300 16px/20px "Noto Sans CJK KR", sans-serif;
}
tbody th { height: 21px; padding-top: 1px; }
thead th {
  height: 22px;
  padding-top: 1px;
  line-height: 19px;
  border-right: 0;
  border-bottom: 1px solid #999;
  background: linear-gradient(#ddd, #999) right / 1px 100% no-repeat #e6e6e6;
  white-space: nowrap;
}
.corner svg { margin: 0 0 0 11px; }
thead .sel { border-bottom: 2px solid #217346; background-color: #d2d2d2; color: #217346; }
tbody .sel { border-right: 2px solid #217346; background-color: #d2d2d2; color: #217346; }
td {
  height: 21px;
  padding: 0;
  background: #fff;
  color: #000;
  font: 15px/19px "Liberation Sans", sans-serif;
  vertical-align: top;
  white-space: nowrap;
}
.first { border-left: 1px solid #0000c8; }
.last { border-right: 2px solid #0000d4; }
td.out { border-left: 1px solid #0000d4; background: #a0a0a0; }
.note { padding-left: 6px; }
.head { padding-left: 2px; font-weight: 700; }
.cond { padding-left: 14px; }
.item { padding-left: 26px; }
.eq { padding-left: 2px; }
.val { padding-right: 7px; text-align: right; }
.active { position: relative; }
.active::before { content: ""; position: absolute; inset: -2px -1px -1px -2px; border: 2px solid #217346; }
.active::after { content: ""; position: absolute; right: -3px; bottom: -3px; width: 6px; height: 6px; border: solid #fff; border-width: 1px 0 0 1px; background: #217346; }
.drawing { position: absolute; left: 64px; top: 126px; }
.watermark { fill: #969696; font: 66px "Open Sans", "Noto Sans CJK KR", sans-serif; }
.deg { fill: #000; font: 300 16px "Noto Sans CJK KR", sans-serif; }

/* scrollbars */
.vscroll { display: flex; flex-direction: column; width: 22px; padding: 2px 3px 0 4px; }
.vscroll button, .hscroll button { width: 15px; height: 15px; flex: none; border: 1px solid #ababab; background: #fff; }
.track { flex: 1; background: #dadada; }
.thumb { border: 1px solid #ababab; background: #fff; }
.vscroll .thumb { height: 40px; margin-top: 7px; }

/* sheet tabs */
.sheets { display: flex; align-items: center; height: 28px; flex: none; border-top: 1px solid #999; padding-right: 21px; color: #222; }
.sheets a {
  position: relative;
  padding: 2px 10px 4px;
  margin: 1px 2px 3px 3px;
  background: #9cf;
  line-height: 16px;
  white-space: nowrap;
}
.sheets .cur ~ a { padding: 2px 11px 4px; }
.sheets a::after { content: ""; position: absolute; right: -3px; top: 1px; bottom: 0; width: 1px; background: #999; }
.sheets .cur {
  align-self: stretch;
  margin: -1px -1px 3px 2px;
  padding: 4px 3px 0;
  border: solid #999;
  border-width: 0 1px;
  border-bottom: 2px solid #217346;
  background: #fff;
  color: #217346;
}
.sheets .cur::after { content: none; }
.cur span { display: block; padding: 0 11px 2px; background: linear-gradient(#fff, #d5e7fb); }
.nav { width: 28px; }
.nav:first-child { margin-left: 16px; }
.dots3 { color: #0e6b38; font-weight: 700; }
.add { margin-left: 35px; }
.sheets .dots { margin: 0 15px 0 auto; }
.hscroll { display: flex; width: 120px; height: 15px; }
.hscroll .thumb { width: 17px; height: 15px; }

/* status bar */
.status { display: flex; align-items: center; height: 22px; flex: none; padding: 0 18px 0 8px; border-top: 1px solid #c8c6c4; background: #f3f2f1; font-size: 12px; }
.ready { margin-right: auto; }
.view { width: 40px; height: 21px; }
.view.on { background: #d2d0ce; }
.zoom { width: 19px; }
.status input { width: 100px; height: 20px; appearance: none; background: linear-gradient(#999, #999) center / 100% 1px no-repeat; }
.status input::-webkit-slider-thumb { appearance: none; width: 5px; height: 11px; background: #777; }
.percent { width: 32px; margin-left: 7px; text-align: right; }
```
